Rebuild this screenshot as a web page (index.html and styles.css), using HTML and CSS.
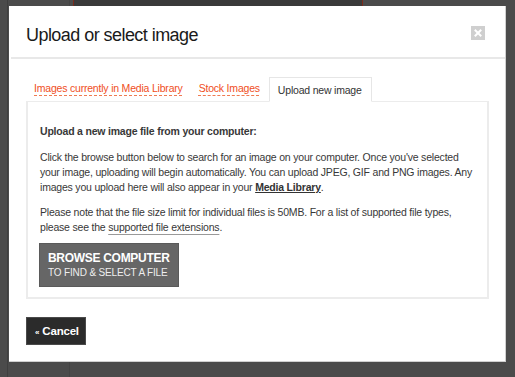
FILE: index.html
```html
<!DOCTYPE html>
<html>
<head>
<meta charset="utf-8">
<link rel="stylesheet" href="styles.css">
</head>
<body>
<div class="backdrop">
  <div class="topstrip"></div>
  <div class="modal">
    <div class="modal-header">
      <h1 class="title">Upload or select image</h1>
      <span class="close">
        <svg width="14" height="14" viewBox="0 0 14 14"><path d="M4.5 4.5 L9.5 9.5 M9.5 4.5 L4.5 9.5" stroke="#fff" stroke-width="2" stroke-linecap="square"/></svg>
      </span>
    </div>
    <div class="modal-body">
      <div class="tabs">
        <a class="tab">Images currently in Media Library</a>
        <a class="tab">Stock Images</a>
        <span class="tab active">Upload new image</span>
      </div>
      <div class="panel">
        <p class="lead">Upload a new image file from your computer:</p>
        <p>Click the browse button below to search for an image on your computer. Once you've selected your image, uploading will begin automatically. You can upload JPEG, GIF and PNG images. Any images you upload here will also appear in your <a class="strong-link">Media Library</a>.</p>
        <p>Please note that the file size limit for individual files is 50MB. For a list of supported file types, please see the <a class="plain-link">supported file extensions</a>.</p>
        <button class="browse"><span class="browse-main">BROWSE COMPUTER</span><span class="browse-sub">TO FIND &amp; SELECT A FILE</span></button>
      </div>
      <button class="cancel"><span class="raquo">«</span> Cancel</button>
    </div>
  </div>
</div>
</body>
</html>
```

FILE: styles.css
```css
html, body {
  margin: 0;
  padding: 0;
}
body {
  background: #4b4b4b;
  font-family: "Liberation Sans", Arial, sans-serif;
  width: 515px;
  height: 377px;
  overflow: hidden;
}
.backdrop {
  position: relative;
  width: 515px;
  height: 377px;
  background:
    linear-gradient(to right, transparent 7px, #3f3f3f 7px, #3f3f3f 8px, transparent 8px),
    linear-gradient(to right, transparent 69px, #444 69px, #444 70px, transparent 70px),
    #4b4b4b;
}
.topstrip {
  position: absolute;
  left: 73px;
  top: 0;
  width: 288px;
  height: 6px;
  background: #3a3a3a;
  border-left: 1px solid #7a2a1a;
  border-right: 1px solid #7a2a1a;
}
.modal {
  position: absolute;
  left: 9px;
  top: 6px;
  width: 496px;
  height: 355px;
  background: #fff;
  border-right: 1px solid #d0d0d0;
  border-bottom: 1px solid #d0d0d0;
  display: flex;
  flex-direction: column;
}
.modal-header {
  height: 53px;
  margin: 0 0 0 2px;
  border-bottom: 2px solid #e8e8e8;
  display: flex;
  align-items: center;
  justify-content: space-between;
  padding: 6px 20px 0 15px;
  box-sizing: border-box;
}
.title {
  margin: 0;
  font-size: 18px;
  letter-spacing: -0.55px;
  font-weight: normal;
  color: #1a1a1a;
  line-height: 22px;
}
.close {
  width: 14px;
  height: 14px;
  background: #cfcfcf;
  display: block;
  margin-bottom: 4px;
}
.close svg { display: block; }
.modal-body {
  padding: 18px 16px 0 17px;
}
.tabs {
  display: flex;
  align-items: flex-end;
  height: 25px;
  margin-bottom: -1px;
  position: relative;
  z-index: 1;
}
.tab {
  font-size: 10.5px;
  letter-spacing: -0.2px;
  color: #f04e23;
  padding: 0 8px 7px 8px;
  line-height: 14px;
}
.tabs a.tab {
  text-decoration: underline dashed #f07a50;
  text-underline-offset: 3px;
}
.tab:nth-child(2) { padding-left: 8px; padding-right: 9px; }
.tab.active {
  color: #333;
  background: #fff;
  border: 1px solid #e6e6e6;
  border-bottom: 1px solid #fff;
  height: 25px;
  box-sizing: border-box;
  padding: 5px 9px 0 8px;
}
.panel {
  border: 2px solid #ececec;
  border-top-width: 1px;
  padding: 22px 12px 10px 12px;
  height: 198px;
  box-sizing: border-box;
  color: #383838;
  font-size: 10.5px;
  letter-spacing: -0.2px;
  line-height: 15px;
}
.panel p {
  margin: 0 0 10px 0;
}
.panel p.lead {
  font-weight: bold;
  margin: 0 0 11px 0;
}
.strong-link {
  font-weight: bold;
  color: #333;
  text-decoration: underline;
}
.plain-link {
  color: #383838;
  text-decoration: underline solid #999;
  text-underline-offset: 3px;
}
.browse {
  display: flex;
  flex-direction: column;
  align-items: flex-start;
  background: #666;
  border: 1px solid #5a5a5a;
  color: #fff;
  width: 140px;
  height: 44px;
  padding: 6px 0 0 8px;
  box-sizing: border-box;
  margin: -2px 0 0 -1px;
  font-family: "Liberation Sans", Arial, sans-serif;
  white-space: nowrap;
  cursor: pointer;
}
.browse-main {
  font-size: 12px;
  font-weight: bold;
  letter-spacing: -0.3px;
  line-height: 16px;
}
.browse-sub {
  font-size: 10px;
  line-height: 13px;
  color: #eee;
  letter-spacing: -0.15px;
}
.cancel {
  margin-top: 18px;
  width: 60px;
  height: 28px;
  background: #2b2b2b;
  border: 1px solid #4a4a4a;
  color: #fff;
  font-family: "Liberation Sans", Arial, sans-serif;
  font-size: 11.5px;
  letter-spacing: -0.2px;
  font-weight: bold;
  padding: 0 0 0 2px;
  white-space: nowrap;
  cursor: pointer;
}
.raquo {
  font-size: 8px;
}
```
